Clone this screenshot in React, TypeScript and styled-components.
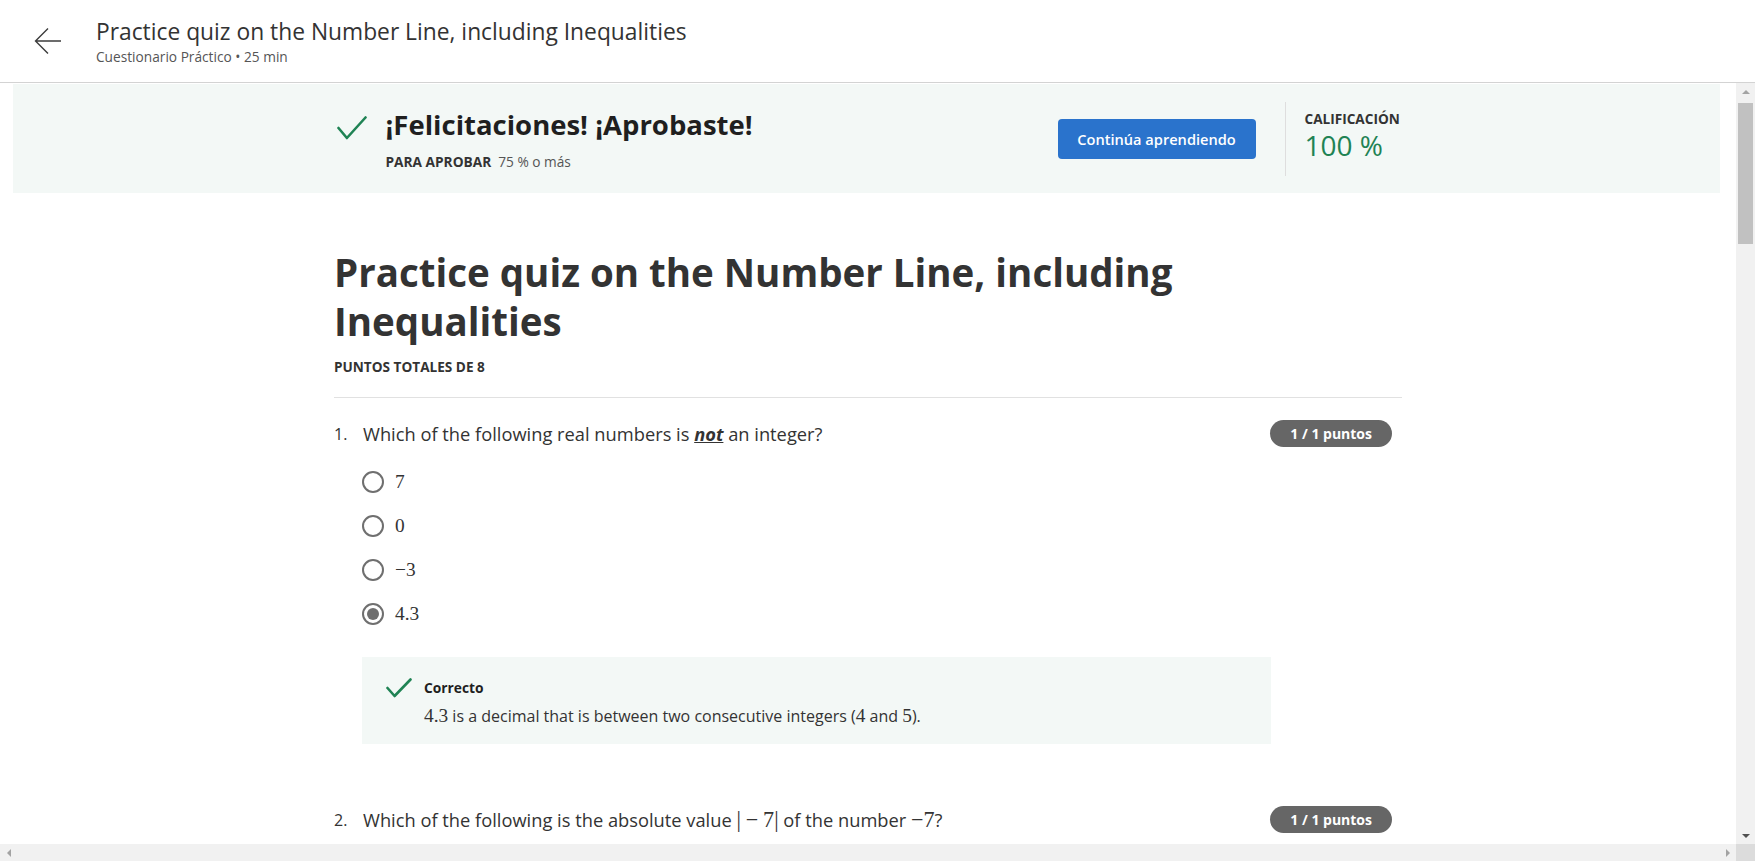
import React from "react";
import styled, { createGlobalStyle } from "styled-components";

const GlobalStyle = createGlobalStyle`
  html, body {
    margin: 0;
    padding: 0;
    height: 100%;
    overflow: hidden;
    background: #ffffff;
  }
  body {
    font-family: "Open Sans", "Noto Sans", Arial, sans-serif;
    color: #1f1f1f;
  }
  #root {
    height: 100%;
  }
  * {
    box-sizing: border-box;
  }
`;

const Page = styled.div`
  display: flex;
  flex-direction: column;
  height: 100vh;
`;

const Header = styled.header`
  display: flex;
  align-items: center;
  height: 83px;
  flex-shrink: 0;
  padding-left: 34px;
  border-bottom: 1px solid #d3d3d3;
  background: #fff;
`;

const BackButton = styled.button`
  display: flex;
  align-items: center;
  justify-content: center;
  width: 28px;
  height: 28px;
  padding: 0;
  border: none;
  background: none;
  cursor: pointer;
  color: #3c3c3c;
`;

const TitleBlock = styled.div`
  display: flex;
  flex-direction: column;
  margin-left: 34px;
`;

const HeaderTitle = styled.h2`
  margin: 0;
  font-size: 22.8px;
  line-height: 30px;
  font-weight: 400;
  color: #333;
`;

const HeaderSub = styled.div`
  font-size: 13.7px;
  line-height: 19px;
  color: #555;
`;

const ScrollArea = styled.div`
  flex: 1;
  min-height: 0;
  display: grid;
  grid-template-columns: 1fr 19px;
  grid-template-rows: 1fr 17px;
`;

const Viewport = styled.div`
  overflow: hidden;
  min-width: 0;
  min-height: 0;
`;

const VScroll = styled.div`
  display: flex;
  flex-direction: column;
  align-items: center;
  background: #f1f1f1;
`;

const HScroll = styled.div`
  display: flex;
  align-items: center;
  justify-content: space-between;
  background: #f1f1f1;
`;

const Corner = styled.div`
  background: #dcdcdc;
`;

const ScrollBtn = styled.div`
  display: flex;
  align-items: center;
  justify-content: center;
  width: 17px;
  height: 17px;
  flex-shrink: 0;
`;

const Thumb = styled.div`
  width: 15px;
  height: 141px;
  margin-top: 3px;
  background: #c1c1c1;
`;

const Spacer = styled.div`
  flex: 1;
`;

const Arrow = styled.div<{ $dir: "up" | "down" | "left" | "right"; $color: string }>`
  width: 0;
  height: 0;
  ${(p) =>
    p.$dir === "up"
      ? `border-left: 4px solid transparent; border-right: 4px solid transparent; border-bottom: 4px solid ${p.$color};`
      : p.$dir === "down"
      ? `border-left: 4px solid transparent; border-right: 4px solid transparent; border-top: 4px solid ${p.$color};`
      : p.$dir === "left"
      ? `border-top: 4px solid transparent; border-bottom: 4px solid transparent; border-right: 4px solid ${p.$color};`
      : `border-top: 4px solid transparent; border-bottom: 4px solid transparent; border-left: 4px solid ${p.$color};`}
`;

const Banner = styled.section`
  margin: 1px 16px 0 13px;
  padding: 18px 0 17px;
  background: #f3f8f6;
`;

const Column = styled.div`
  width: 1068px;
  margin: 0 auto;
`;

const BannerInner = styled(Column)`
  display: flex;
  align-items: center;
`;

const PassGroup = styled.div`
  flex: 1;
  display: flex;
  align-items: flex-start;
  padding-left: 4px;
`;

const PassIcon = styled.div`
  width: 30px;
  height: 24px;
  margin-top: 8px;
  margin-right: 19px;
  flex-shrink: 0;
`;

const PassText = styled.div`
  display: flex;
  flex-direction: column;
`;

const PassHeading = styled.h2`
  margin: 0;
  font-size: 27.5px;
  line-height: 34px;
  font-weight: 700;
  color: #1f1f1f;
`;

const PassMeta = styled.div`
  margin-top: 10px;
  font-size: 13.7px;
  line-height: 19px;
  color: #555;
`;

const MetaLabel = styled.span`
  font-weight: 700;
  color: #333;
  margin-right: 7px;
`;

const PrimaryButton = styled.button`
  width: 198px;
  height: 40px;
  border: none;
  border-radius: 4px;
  background: #2a73cc;
  color: #fff;
  font-family: "Open Sans", Arial, sans-serif;
  font-size: 14.6px;
  font-weight: 600;
  cursor: pointer;
`;

const GradeBlock = styled.div`
  width: 116px;
  height: 74px;
  margin-left: 29px;
  padding: 8px 0 0 19px;
  border-left: 1px solid #dedede;
  display: flex;
  flex-direction: column;
`;

const GradeLabel = styled.div`
  font-size: 13.6px;
  line-height: 18px;
  font-weight: 700;
  color: #333;
`;

const GradeValue = styled.div`
  font-size: 28px;
  line-height: 34px;
  font-weight: 400;
  color: #1f8354;
`;

const Main = styled(Column)`
  padding-top: 55px;
`;

const QuizTitle = styled.h1`
  margin: 0;
  font-size: 38.5px;
  line-height: 49px;
  font-weight: 700;
  color: #333;
`;

const TotalPoints = styled.div`
  margin-top: 12px;
  font-size: 13.6px;
  line-height: 18px;
  font-weight: 700;
  color: #333;
  padding-bottom: 21px;
  border-bottom: 1px solid #e1e1e1;
`;

const Question = styled.div<{ $gap: number }>`
  margin-top: ${(p) => p.$gap}px;
`;

const QuestionHead = styled.div`
  display: flex;
  align-items: center;
  height: 27px;
  padding-right: 10px;
`;

const QNum = styled.span`
  width: 29px;
  flex-shrink: 0;
  font-size: 16px;
  color: #333;
`;

const QText = styled.div`
  flex: 1;
  font-size: 18.3px;
  line-height: 26px;
  color: #333;
`;

const Emph = styled.strong`
  font-style: italic;
  text-decoration: underline;
  font-weight: 700;
`;

const Badge = styled.span`
  height: 27px;
  padding: 0 20px;
  border-radius: 14px;
  background: #666;
  color: #fff;
  font-size: 14px;
  font-weight: 700;
  display: inline-flex;
  align-items: center;
`;

const Math = styled.span`
  font-family: "Liberation Serif", "DejaVu Serif", serif;
  font-size: 1.21em;
  line-height: 1;
`;

const MathOp = styled.span`
  margin: 0 0.22em;
`;

const Options = styled.div`
  margin-top: 13px;
  padding-left: 28px;
  display: flex;
  flex-direction: column;
`;

const OptionRow = styled.label`
  display: flex;
  align-items: center;
  height: 44px;
  font-size: 16px;
  color: #333;
`;

const Radio = styled.span<{ $checked?: boolean }>`
  width: 22px;
  height: 22px;
  border-radius: 50%;
  border: 2px solid #6f6f6f;
  margin-right: 11px;
  flex-shrink: 0;
  display: flex;
  align-items: center;
  justify-content: center;
  &::after {
    content: "";
    width: 12px;
    height: 12px;
    border-radius: 50%;
    background: #6f6f6f;
    display: ${(p) => (p.$checked ? "block" : "none")};
  }
`;

const Feedback = styled.div`
  margin: 21px 0 0 28px;
  width: 909px;
  padding: 22px 24px 16px;
  background: #f3f8f6;
  display: flex;
  align-items: flex-start;
`;

const FeedbackIcon = styled.div`
  width: 26px;
  height: 20px;
  margin-top: -1px;
  margin-right: 12px;
  flex-shrink: 0;
`;

const FeedbackBody = styled.div`
  display: flex;
  flex-direction: column;
`;

const FeedbackTitle = styled.div`
  font-size: 13.8px;
  line-height: 18px;
  font-weight: 700;
  color: #1f1f1f;
`;

const FeedbackText = styled.div`
  margin-top: 7px;
  font-size: 16px;
  line-height: 24px;
  color: #333;
`;

const CheckMark = ({ w, h }: { w: number; h: number }) => (
  <svg width={w} height={h} viewBox={`0 0 ${w} ${h}`} fill="none">
    <path
      d={`M1.5 ${h * 0.5} L${w * 0.33} ${h - 2} L${w - 1.5} 1.5`}
      stroke="#1f8354"
      strokeWidth="2.6"
      strokeLinecap="round"
      strokeLinejoin="round"
    />
  </svg>
);

const options = ["7", "0", "\u22123", "4.3"];

export default function App() {
  return (
    <>
      <GlobalStyle />
      <Page>
        <Header>
          <BackButton aria-label="Volver">
            <svg width="28" height="28" viewBox="0 0 28 28" fill="none">
              <path d="M27 14H1.5M14 1.5L1.5 14L14 26.5" stroke="#3c3c3c" strokeWidth="1.4" />
            </svg>
          </BackButton>
          <TitleBlock>
            <HeaderTitle>Practice quiz on the Number Line, including Inequalities</HeaderTitle>
            <HeaderSub>Cuestionario Práctico • 25 min</HeaderSub>
          </TitleBlock>
        </Header>
        <ScrollArea>
          <Viewport>
            <Banner>
              <BannerInner>
                <PassGroup>
                  <PassIcon>
                    <CheckMark w={30} h={24} />
                  </PassIcon>
                  <PassText>
                    <PassHeading>¡Felicitaciones! ¡Aprobaste!</PassHeading>
                    <PassMeta>
                      <MetaLabel>PARA APROBAR</MetaLabel>75 % o más
                    </PassMeta>
                  </PassText>
                </PassGroup>
                <PrimaryButton>Continúa aprendiendo</PrimaryButton>
                <GradeBlock>
                  <GradeLabel>CALIFICACIÓN</GradeLabel>
                  <GradeValue>100 %</GradeValue>
                </GradeBlock>
              </BannerInner>
            </Banner>
            <Main>
              <QuizTitle>Practice quiz on the Number Line, including Inequalities</QuizTitle>
              <TotalPoints>PUNTOS TOTALES DE 8</TotalPoints>
              <Question $gap={22}>
                <QuestionHead>
                  <QNum>1.</QNum>
                  <QText>
                    Which of the following real numbers is <Emph>not</Emph> an integer?
                  </QText>
                  <Badge>1 / 1 puntos</Badge>
                </QuestionHead>
                <Options>
                  {options.map((o, i) => (
                    <OptionRow key={o}>
                      <Radio $checked={i === 3} />
                      <Math>{o}</Math>
                    </OptionRow>
                  ))}
                </Options>
                <Feedback>
                  <FeedbackIcon>
                    <CheckMark w={26} h={20} />
                  </FeedbackIcon>
                  <FeedbackBody>
                    <FeedbackTitle>Correcto</FeedbackTitle>
                    <FeedbackText>
                      <Math>4.3</Math> is a decimal that is between two consecutive integers (<Math>4</Math> and{" "}
                      <Math>5</Math>).
                    </FeedbackText>
                  </FeedbackBody>
                </Feedback>
              </Question>
              <Question $gap={62}>
                <QuestionHead>
                  <QNum>2.</QNum>
                  <QText>
                    Which of the following is the absolute value{" "}
                    <Math>
                      |<MathOp>−</MathOp>7|
                    </Math>{" "}
                    of the number <Math>−7</Math>?
                  </QText>
                  <Badge>1 / 1 puntos</Badge>
                </QuestionHead>
              </Question>
            </Main>
          </Viewport>
          <VScroll>
            <ScrollBtn>
              <Arrow $dir="up" $color="#a3a3a3" />
            </ScrollBtn>
            <Thumb />
            <Spacer />
            <ScrollBtn>
              <Arrow $dir="down" $color="#505050" />
            </ScrollBtn>
          </VScroll>
          <HScroll>
            <ScrollBtn>
              <Arrow $dir="left" $color="#a3a3a3" />
            </ScrollBtn>
            <ScrollBtn>
              <Arrow $dir="right" $color="#a3a3a3" />
            </ScrollBtn>
          </HScroll>
          <Corner />
        </ScrollArea>
      </Page>
    </>
  );
}
